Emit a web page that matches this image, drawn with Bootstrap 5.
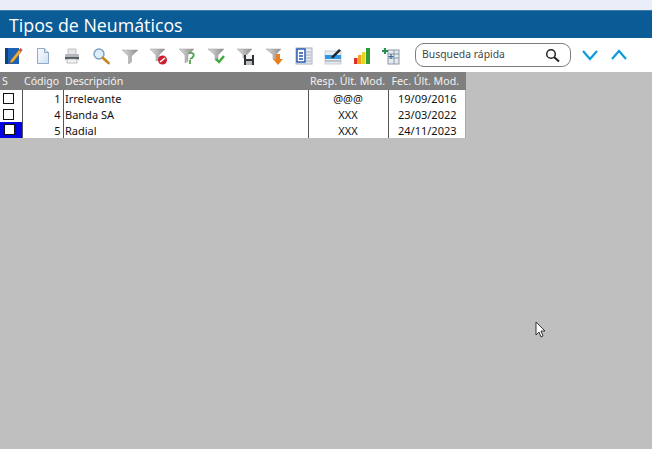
<!DOCTYPE html>
<html lang="es"><head><meta charset="utf-8"><title>Tipos de Neumáticos</title>
<link href="https://cdn.jsdelivr.net/npm/bootstrap@5.3.0/dist/css/bootstrap.min.css" rel="stylesheet">
<style>
html,body{height:100%;}
body{background:#bfbfbf;overflow:hidden;font-family:"Noto Sans","Liberation Sans",sans-serif;position:relative;}
.topstrip{height:10px;background:#e9eef9;}
.titlebar{height:28px;background:#0a5b96;color:#fff;font:17.800px/29px "Open Sans","Noto Sans",sans-serif;padding-left:9px;border-top:1px solid #3f7cab;}
.toolstrip{height:34px;background:#fff;padding-left:5px;}
.tool{width:18px;height:18px;margin:2px 11px 0 0;flex:none;display:block;}
.quick{width:156px;height:24px;margin-left:4px;flex:none;border:1px solid #7d7d7d;border-radius:9px;font-size:10.400px;color:#444;padding:0 10px 0 6px;}
.chev{width:18px;height:12px;flex:none;margin-left:11px;}
.chev-first{margin-left:10px;}
.grid{width:466px;border-collapse:collapse;table-layout:fixed;font-size:11px;line-height:15px;color:#111;}
.grid th{background:#7f7f7f;color:#f2f2f2;font-weight:400;font-size:10.600px;height:18px;padding:1px 2px 0;white-space:nowrap;}
.grid th.code-h{padding-right:5px;}
.grid th.resp-h{padding-right:3px;}
.grid th.fec-h{padding-right:7px;}
.grid td{background:#fff;height:16px;padding:1px 2px 0;border-right:1px solid #555;white-space:nowrap;}
.grid td.desc{padding-left:1.500px;}
.grid td:last-child{border-right:0;box-shadow:inset -1px 0 0 #aaa;}
.tick{display:block;width:11px;height:11px;border:1px solid #111;background:#fff;margin-left:1px;}
.grid td.current{padding:0;background:#0000e0;}
.curbox{height:16px;margin-left:1px;border:1px dotted #222;padding:1px 0 0 2px;}
.curbox .tick{margin-left:0;}
.pointer{position:absolute;left:535px;top:321px;width:12px;height:18px;}
</style></head><body>
<svg width="0" height="0" class="position-absolute"><defs>
<linearGradient id="fg"><stop offset="0" stop-color="#dcdcdc"/><stop offset=".5" stop-color="#b5b5b5"/><stop offset="1" stop-color="#8a8a8a"/></linearGradient>
<linearGradient id="pg" x1="0" y1="0" x2="1" y2="1"><stop offset="0" stop-color="#fbfdff"/><stop offset="1" stop-color="#cfe0f2"/></linearGradient>
</defs></svg>
<div class="topstrip"></div>
<div class="titlebar">Tipos de Neumáticos</div>
<div class="toolstrip d-flex align-items-center">
<svg class="tool" viewBox="0 0 18 18"><rect x="0" y="1" width="14" height="16" fill="#1c63b5"/><rect x="0" y="1" width="3" height="16" fill="#0e3f80"/><path d="M6 13 14 3l2 2-8 10-3 1z" fill="#f4b63a" stroke="#a8641a" stroke-width=".6"/><path d="M14 3l1.500-2 2 2-1.500 2z" fill="#d8433a"/></svg>
<svg class="tool" viewBox="0 0 18 18"><path d="M3.500 1.500h7l4 4v11h-11z" fill="url(#pg)" stroke="#8fa9c6"/><path d="M10.500 1.500v4h4" fill="#d5e2f0" stroke="#8fa9c6"/></svg>
<svg class="tool" viewBox="0 0 18 18"><rect x="5" y="2" width="8" height="6" fill="#e6e6e6" stroke="#aaa" stroke-width=".7"/><rect x="2" y="7" width="14" height="6" rx="1" fill="#b4b8bd"/><rect x="2" y="10" width="14" height="2" fill="#55585c"/><rect x="4" y="12" width="10" height="4" fill="#f1f1f1" stroke="#999" stroke-width=".6"/></svg>
<svg class="tool" viewBox="0 0 18 18"><circle cx="7" cy="7" r="5" fill="#dcedfb" stroke="#7c9fbf" stroke-width="1.400"/><path d="m11 11 5.500 5" stroke="#c48a22" stroke-width="2.800" stroke-linecap="round"/></svg>
<svg class="tool" viewBox="0 0 18 18"><path d="M1 3h16l-6.500 6v6l-3 2V9z" fill="url(#fg)" stroke="#9a9a9a" stroke-width=".5"/></svg>
<svg class="tool" viewBox="0 0 18 18"><path d="M0 2h15l-6 6v5l-3 1V8z" fill="url(#fg)" stroke="#9a9a9a" stroke-width=".5"/><circle cx="12.500" cy="13" r="4.500" fill="#cc2030"/><path d="m10 15 5-4" stroke="#fff" stroke-width="1.600"/></svg>
<svg class="tool" viewBox="0 0 18 18"><path d="M0 2h15l-6 6v6l-3 2V8z" fill="url(#fg)" stroke="#9a9a9a" stroke-width=".5"/><path d="M10 6c5-1 6 2 3 5l-2 1m0 1v4" stroke="#4ca54a" stroke-width="1.800" fill="none"/></svg>
<svg class="tool" viewBox="0 0 18 18"><path d="M0 2h16l-6 6v6l-3-1V8z" fill="url(#fg)" stroke="#9a9a9a" stroke-width=".5"/><path d="m8 12 3 3 5-6" stroke="#3fa83f" stroke-width="2.400" fill="none"/></svg>
<svg class="tool" viewBox="0 0 18 18"><path d="M0 2h15l-5 5.500V11H6V7.500z" fill="url(#fg)" stroke="#9a9a9a" stroke-width=".5"/><rect x="7" y="8" width="10" height="10" fill="#2f3237"/><rect x="9" y="8" width="6" height="4" fill="#f1f1f1"/><rect x="9" y="14" width="6" height="4" fill="#bbb"/></svg>
<svg class="tool" viewBox="0 0 18 18"><path d="M0 2h15l-5 5.500V13l-3-1V7.500z" fill="url(#fg)" stroke="#9a9a9a" stroke-width=".5"/><path d="M10 7h4v5h3l-5 6-5-6h3z" fill="#e8811e"/></svg>
<svg class="tool" viewBox="0 0 18 18"><rect x="1" y="1" width="16" height="16" fill="#e3e8f0" stroke="#a8b2c0"/><rect x="2" y="2" width="8" height="13" fill="#fff" stroke="#1f55ad" stroke-width="1.400"/><path d="M4 6h4M4 9h4M4 12h4" stroke="#1f55ad" stroke-width="1.400"/><path d="M11 5h5M11 8h5M11 11h5M11 14h5" stroke="#9aa5b3" stroke-width=".8"/></svg>
<svg class="tool" viewBox="0 0 18 18"><rect x="1" y="4" width="16" height="13" fill="#e8edf3" stroke="#aab3bd" stroke-width=".6"/><rect x="1" y="8" width="16" height="4" fill="#2f98e0"/><path d="M1 14h16" stroke="#8f99a5"/><path d="m7 10 8-8 2 1.500-8 8z" fill="#23262b"/></svg>
<svg class="tool" viewBox="0 0 18 18"><rect x="1" y="11" width="3.500" height="6" fill="#e12c28"/><rect x="5" y="8" width="3.500" height="9" fill="#f2a41d"/><rect x="9" y="5" width="3.500" height="12" fill="#e7d22a"/><rect x="13" y="1" width="4" height="16" fill="#2f9a3a"/></svg>
<svg class="tool" viewBox="0 0 18 18"><rect x="6" y="3" width="11" height="14" fill="#e6ebf0" stroke="#8a98a6"/><path d="M12 3v14M6 7h11M6 11h11" stroke="#8a98a6"/><path d="M3 1v6M0 4h6" stroke="#2a8f52" stroke-width="2.200"/><path d="M9 7v5M6.500 9.500h5" stroke="#356c9f" stroke-width="1.200"/></svg>
<div class="quick d-flex align-items-center justify-content-between"><span>Busqueda rápida</span><svg width="15" height="15" viewBox="0 0 15 15"><circle cx="6" cy="6" r="4.300" fill="none" stroke="#222" stroke-width="1.500"/><path d="m9 9 5 4.500" stroke="#222" stroke-width="2"/></svg></div>
<svg class="chev chev-first" viewBox="0 0 18 12"><path d="m2 2 7 8 7-8" fill="none" stroke="#0d9be0" stroke-width="2.200"/></svg>
<svg class="chev" viewBox="0 0 18 12"><path d="m2 10 7-8 7 8" fill="none" stroke="#0d9be0" stroke-width="2.200"/></svg>
</div>
<table class="grid">
<colgroup><col style="width:22px"><col style="width:41px"><col style="width:245px"><col style="width:80px"><col style="width:78px"></colgroup>
<thead><tr><th>S</th><th class="text-end code-h">Código</th><th>Descripción</th><th class="text-end resp-h">Resp. Últ. Mod.</th><th class="text-end fec-h">Fec. Últ. Mod.</th></tr></thead>
<tbody>
<tr><td><span class="tick"></span></td><td class="text-end">1</td><td class="desc">Irrelevante</td><td class="text-center">@@@</td><td class="text-center">19/09/2016</td></tr>
<tr><td><span class="tick"></span></td><td class="text-end">4</td><td class="desc">Banda SA</td><td class="text-center">XXX</td><td class="text-center">23/03/2022</td></tr>
<tr><td class="current"><div class="curbox"><span class="tick"></span></div></td><td class="text-end">5</td><td class="desc">Radial</td><td class="text-center">XXX</td><td class="text-center">24/11/2023</td></tr>
</tbody></table>
<svg class="pointer" viewBox="0 0 12 18"><path d="M1 1v13l3-3 2 5 2-1-2-5h4z" fill="#fff" stroke="#222" stroke-width=".9"/></svg>
</body></html>
